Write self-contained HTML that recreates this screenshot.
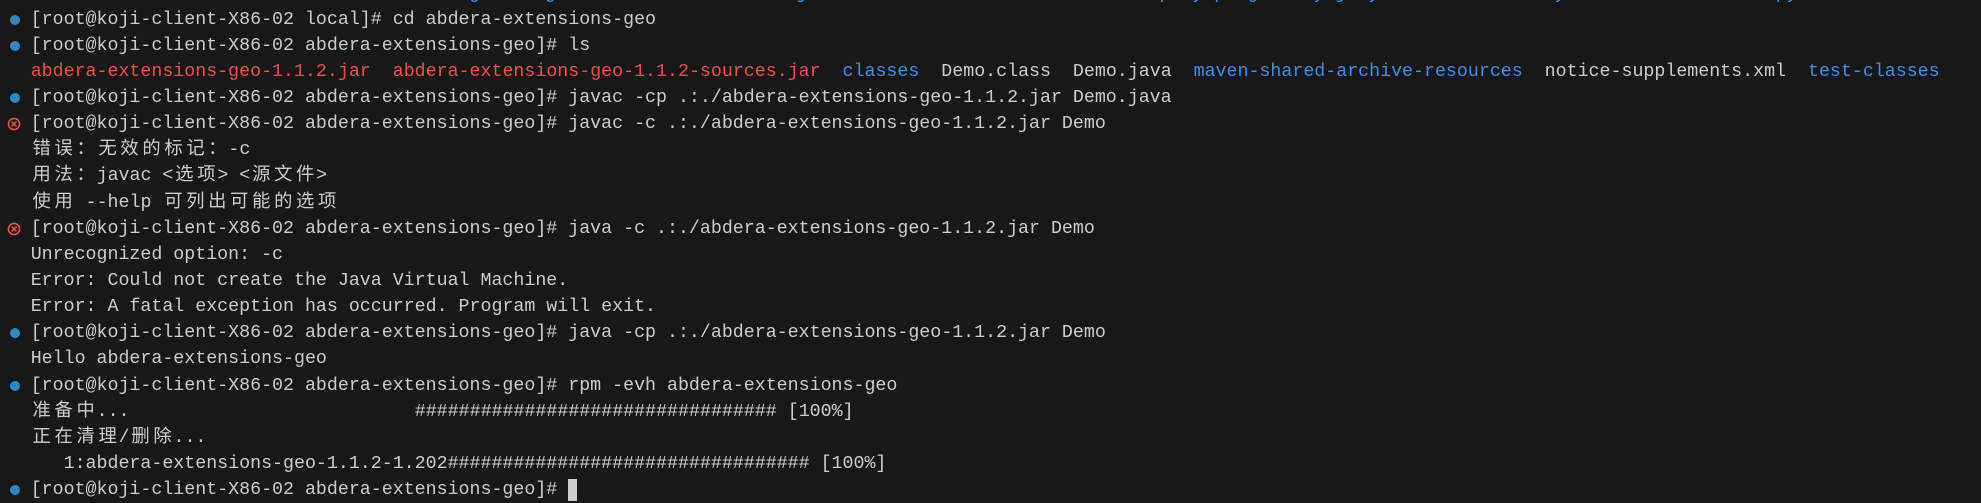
<!DOCTYPE html>
<html><head><meta charset="utf-8"><style>
html,body{margin:0;padding:0;background:#181818;width:1981px;height:484px;overflow:hidden}
#t{position:absolute;left:30.7px;top:-19.5px;font-family:"Liberation Mono","Noto Sans CJK SC",monospace;font-size:18.3px;line-height:26.15px;color:#cccccc}
.l{height:26.15px;position:relative;white-space:pre;overflow:visible}
.b{color:#3b8eea}.r{color:#f14c4c}
.w{display:inline-block;width:21.98px;text-align:center;font-family:"Noto Sans CJK SC",sans-serif;line-height:20px;vertical-align:baseline}
.d{position:absolute;left:-21px;top:8px;width:10px;height:10px;border-radius:50%;background:#2b89c6}
.e{position:absolute;left:-23.5px;top:6px}
.a{position:absolute;top:0}
.cur{display:inline-block;width:9px;height:22px;background:#cccccc;vertical-align:top;margin-top:2px}
</style></head><body>
<div id="t"><div class="l b"><span class="a" style="left:0">ucture-lint</span><span class="a" style="left:253px">libraries</span><span class="a" style="left:362px">etc</span><span class="a" style="left:438px">games</span><span class="a" style="left:514px">go</span><span class="a" style="left:766px">java</span><span class="a" style="left:853px">lib</span><span class="a" style="left:945px">license</span><span class="a" style="left:1041px">maven-deploy-plugin</span><span class="a" style="left:1272px">my_jekyll</span><span class="a" style="left:1513px">my-maven</span><span class="a" style="left:1626px">node</span><span class="a" style="left:1745px">pythons</span><span class="a" style="left:1845px">ssln</span></div><div class="l"><span class="d"></span>[root@koji-client-X86-02 local]# cd abdera-extensions-geo</div><div class="l"><span class="d"></span>[root@koji-client-X86-02 abdera-extensions-geo]# ls</div><div class="l"><span class="r">abdera-extensions-geo-1.1.2.jar</span>  <span class="r">abdera-extensions-geo-1.1.2-sources.jar</span>  <span class="b">classes</span>  Demo.class  Demo.java  <span class="b">maven-shared-archive-resources</span>  notice-supplements.xml  <span class="b">test-classes</span></div><div class="l"><span class="d"></span>[root@koji-client-X86-02 abdera-extensions-geo]# javac -cp .:./abdera-extensions-geo-1.1.2.jar Demo.java</div><div class="l"><svg class="e" width="14" height="14" viewBox="0 0 14 14"><circle cx="7" cy="7" r="5.6" fill="none" stroke="#f14c4c" stroke-width="1.6"/><path d="M4.6 4.6L9.4 9.4M9.4 4.6L4.6 9.4" stroke="#f14c4c" stroke-width="1.6"/></svg>[root@koji-client-X86-02 abdera-extensions-geo]# javac -c .:./abdera-extensions-geo-1.1.2.jar Demo</div><div class="l"><span class="w">错</span><span class="w">误</span><span class="w">：</span><span class="w">无</span><span class="w">效</span><span class="w">的</span><span class="w">标</span><span class="w">记</span><span class="w">：</span>-c</div><div class="l"><span class="w">用</span><span class="w">法</span><span class="w">：</span>javac &lt;<span class="w">选</span><span class="w">项</span>&gt; &lt;<span class="w">源</span><span class="w">文</span><span class="w">件</span>&gt;</div><div class="l"><span class="w">使</span><span class="w">用</span> --help <span class="w">可</span><span class="w">列</span><span class="w">出</span><span class="w">可</span><span class="w">能</span><span class="w">的</span><span class="w">选</span><span class="w">项</span></div><div class="l"><svg class="e" width="14" height="14" viewBox="0 0 14 14"><circle cx="7" cy="7" r="5.6" fill="none" stroke="#f14c4c" stroke-width="1.6"/><path d="M4.6 4.6L9.4 9.4M9.4 4.6L4.6 9.4" stroke="#f14c4c" stroke-width="1.6"/></svg>[root@koji-client-X86-02 abdera-extensions-geo]# java -c .:./abdera-extensions-geo-1.1.2.jar Demo</div><div class="l">Unrecognized option: -c</div><div class="l">Error: Could not create the Java Virtual Machine.</div><div class="l">Error: A fatal exception has occurred. Program will exit.</div><div class="l"><span class="d"></span>[root@koji-client-X86-02 abdera-extensions-geo]# java -cp .:./abdera-extensions-geo-1.1.2.jar Demo</div><div class="l">Hello abdera-extensions-geo</div><div class="l"><span class="d"></span>[root@koji-client-X86-02 abdera-extensions-geo]# rpm -evh abdera-extensions-geo</div><div class="l"><span class="w">准</span><span class="w">备</span><span class="w">中</span>...                          ################################# [100%]</div><div class="l"><span class="w">正</span><span class="w">在</span><span class="w">清</span><span class="w">理</span>/<span class="w">删</span><span class="w">除</span>...</div><div class="l">   1:abdera-extensions-geo-1.1.2-1.202################################# [100%]</div><div class="l"><span class="d"></span>[root@koji-client-X86-02 abdera-extensions-geo]# <span class="cur"></span></div></div>
</body></html>
